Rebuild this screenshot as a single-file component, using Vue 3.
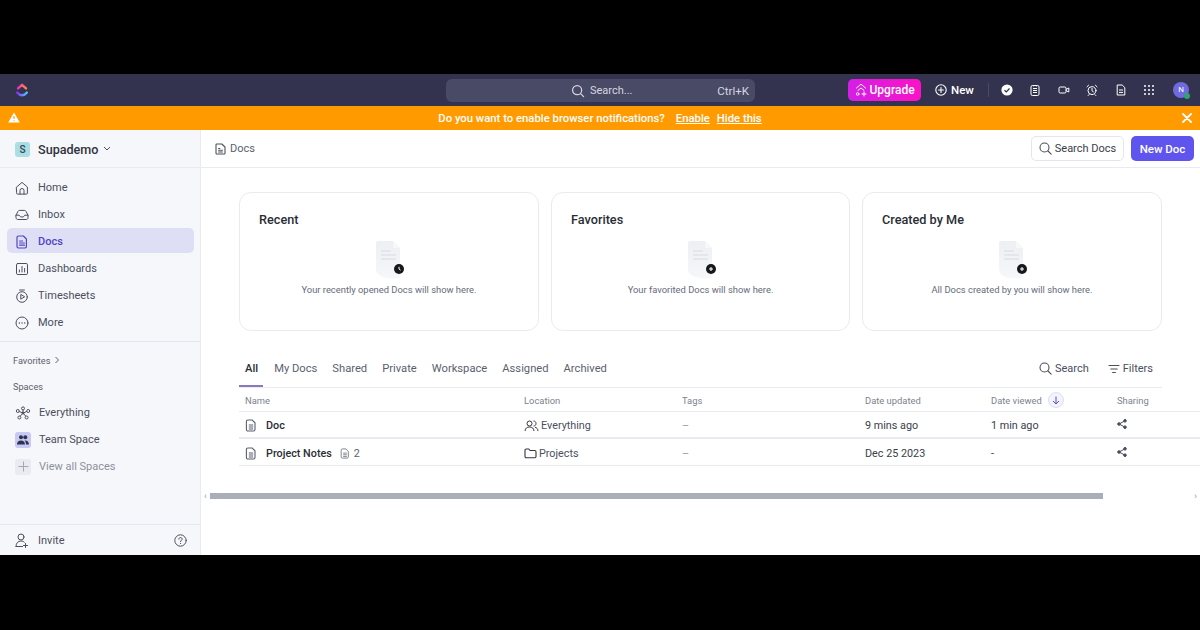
<script setup>
const navItems = [
  { label: 'Home', icon: 'home' },
  { label: 'Inbox', icon: 'inbox' },
  { label: 'Docs', icon: 'doc', active: true },
  { label: 'Dashboards', icon: 'dash' },
  { label: 'Timesheets', icon: 'timer' },
  { label: 'More', icon: 'more' }
]

const cards = [
  { title: 'Recent', text: 'Your recently opened Docs will show here.', badge: 'clock' },
  { title: 'Favorites', text: 'Your favorited Docs will show here.', badge: 'plus' },
  { title: 'Created by Me', text: 'All Docs created by you will show here.', badge: 'plus' }
]

const tabs = ['All', 'My Docs', 'Shared', 'Private', 'Workspace', 'Assigned', 'Archived']
</script>

<template>
  <div class="frame">
    <div class="app">
      <header class="topbar">
        <svg class="logo" width="14" height="16" viewBox="0 0 14 16" fill="none" stroke-width="2.4" stroke-linecap="round" stroke-linejoin="round">
          <defs>
            <linearGradient id="logoTop" x1="0" y1="0" x2="1" y2="0">
              <stop offset="0" stop-color="#f02fc2" />
              <stop offset="1" stop-color="#ff8a3c" />
            </linearGradient>
            <linearGradient id="logoBottom" x1="0" y1="0" x2="1" y2="0">
              <stop offset="0" stop-color="#8930fd" />
              <stop offset="1" stop-color="#49ccf9" />
            </linearGradient>
          </defs>
          <path d="M3 6.4 7 2.8l4 3.6" stroke="url(#logoTop)" />
          <path d="M2.2 10.6C3.4 12.2 5 13.2 7 13.2s3.6-1 4.8-2.6" stroke="url(#logoBottom)" />
        </svg>
        <div class="search">
          <svg width="14" height="14" viewBox="0 0 16 16" fill="none" stroke="#d5d6e2" stroke-width="1.4" stroke-linecap="round"><circle cx="7" cy="7" r="5.2" /><path d="m11 11 3.4 3.4" /></svg>
          <span class="search-text">Search...</span>
          <span class="search-key">Ctrl+K</span>
        </div>
        <div class="top-actions">
          <button class="upgrade">
            <svg width="12" height="14" viewBox="0 0 12 14" fill="none" stroke="#fff" stroke-width="1" stroke-linecap="round" stroke-linejoin="round"><path d="M1.500 5 6 1.200 10.500 5M3 7.500 6 5l3 2.500" /><circle cx="2.600" cy="11" r="1.300" /><path d="M7 11h4M9 9v4" /></svg>
            Upgrade
          </button>
          <div class="new">
            <svg width="12" height="12" viewBox="0 0 12 12" fill="none" stroke="#fff" stroke-width="1.100" stroke-linecap="round"><circle cx="6" cy="6" r="5.200" /><path d="M6 3.600v4.800M3.600 6h4.800" /></svg>
            New
          </div>
          <span class="top-sep"></span>
          <div class="top-icons">
            <svg width="12" height="12" viewBox="0 0 12 12"><circle cx="6" cy="6" r="5.600" fill="#fff" /><path d="m3.500 6.200 1.800 1.700 3.200-3.400" fill="none" stroke="#33334f" stroke-width="1.300" /></svg>
            <svg width="12" height="12" viewBox="0 0 12 12" fill="none" stroke="#fff" stroke-width="1"><rect x="2" y="1.500" width="8" height="10" rx="1.400" /><path d="M4 4.500h4M4 6.500h4M4 8.500h4M4.500 1v1.400M7.500 1v1.400" /></svg>
            <svg width="12" height="12" viewBox="0 0 12 12" fill="none" stroke="#fff" stroke-width="1"><rect x="1" y="3" width="7" height="6" rx="1.200" /><path d="m8 5.400 2.800-1.400v4L8 6.600" /></svg>
            <svg width="12" height="12" viewBox="0 0 12 12" fill="none" stroke="#fff" stroke-width="1" stroke-linecap="round"><circle cx="6" cy="6.600" r="4" /><path d="M6 4.400v2.400l1.400 1M1 2.800 2.600 1.200M11 2.800 9.400 1.200M3 10.600l-.8.900M9 10.600l.8.900" /></svg>
            <svg width="12" height="12" viewBox="0 0 12 12" fill="none" stroke="#fff" stroke-width="1" stroke-linejoin="round"><path d="M2.200 1h5l2.600 2.600V11H2.200zM4 6h4M4 8.400h4" /></svg>
            <svg width="12" height="12" viewBox="0 0 12 12" fill="#fff"><circle cx="2" cy="2" r="1" /><circle cx="6" cy="2" r="1" /><circle cx="10" cy="2" r="1" /><circle cx="2" cy="6" r="1" /><circle cx="6" cy="6" r="1" /><circle cx="10" cy="6" r="1" /><circle cx="2" cy="10" r="1" /><circle cx="6" cy="10" r="1" /><circle cx="10" cy="10" r="1" /></svg>
          </div>
          <div class="avatar">N<span class="online"></span></div>
        </div>
      </header>

      <div class="banner">
        <svg class="warn" width="12" height="11" viewBox="0 0 12 11"><path d="M6 .4 11.800 10.600H.2z" fill="#fff" /><path d="M6 4v3M6 8.200v1" stroke="#ff9a00" stroke-width="1.100" /></svg>
        <span class="banner-text">Do you want to enable browser notifications?</span>
        <a class="banner-link first">Enable</a>
        <a class="banner-link">Hide this</a>
        <svg class="close" width="10" height="10" viewBox="0 0 10 10" stroke="#fff" stroke-width="1.800" stroke-linecap="round"><path d="m1 1 8 8M9 1 1 9" /></svg>
      </div>

      <div class="body">
        <aside class="sidebar">
          <div class="workspace">
            <span class="ws-badge">S</span>
            <span class="ws-name">Supademo</span>
            <svg width="8" height="6" viewBox="0 0 8 6" fill="none" stroke="#4b4f5e" stroke-width="1"><path d="m1 1 3 3 3-3" /></svg>
          </div>

          <nav class="nav">
            <div v-for="item in navItems" :key="item.label" class="nav-item" :class="{ active: item.active }">
              <svg width="14" height="14" viewBox="0 0 14 14" fill="none" stroke="currentColor" stroke-width="1" stroke-linejoin="round" stroke-linecap="round">
                <template v-if="item.icon === 'home'"><path d="M1.600 6 7 1.400 12.400 6v6.200a.9.9 0 0 1-.9.9h-9a.9.9 0 0 1-.9-.9z" /><path d="M5 13V9.500a2 2 0 0 1 4 0V13" /></template>
                <template v-else-if="item.icon === 'inbox'"><path d="M1 7.200 3 3.400c.3-.6.8-1 1.500-1h5c.7 0 1.200.4 1.500 1l2 3.800v2.600c0 1-.8 1.700-1.700 1.700H2.700C1.800 11.500 1 10.800 1 9.800z" /><path d="M1 7.200h3.200c.3 1.200 1.400 1.800 2.800 1.800s2.500-.6 2.800-1.800H13" /></template>
                <template v-else-if="item.icon === 'doc'"><path d="M3.400 1h5l3 3v7.600c0 .8-.6 1.400-1.400 1.400H3.400C2.600 13 2 12.400 2 11.600V2.400C2 1.600 2.600 1 3.400 1z" stroke-width="1.200" /><path d="M4.600 6h3M4.600 8h4.800M4.600 10.200h4.800" stroke-width="1.200" /></template>
                <template v-else-if="item.icon === 'dash'"><rect x="1.500" y="1.500" width="11" height="11" rx="1.300" /><path d="M4.400 10V8M7 10V4.500M9.600 10V6.500" /></template>
                <template v-else-if="item.icon === 'timer'"><circle cx="7" cy="8" r="5.300" /><path d="M4.600 1h4.800" /><path d="M5.800 5.800v4.400L9.300 8z" /></template>
                <template v-else><circle cx="7" cy="7" r="6" /><path d="M4.300 7h.1M7 7h.1M9.700 7h.1" stroke-width="1.300" /></template>
              </svg>
              <span>{{ item.label }}</span>
            </div>
          </nav>

          <div class="side-sep"></div>

          <div class="favorites">
            Favorites
            <svg width="6" height="8" viewBox="0 0 6 8" fill="none" stroke="#5a5f6f" stroke-width="1"><path d="m1.500 1 3 3-3 3" /></svg>
          </div>
          <div class="spaces-title">Spaces</div>

          <div class="space-list">
            <div class="space-item">
              <svg width="16" height="14" viewBox="0 0 16 14" fill="none" stroke="#4b4f5e" stroke-width="1"><circle cx="8" cy="2.400" r="1.500" /><circle cx="2.800" cy="5" r="1.500" /><circle cx="13.200" cy="5" r="1.500" /><circle cx="4.400" cy="11.500" r="1.500" /><circle cx="11.600" cy="11.500" r="1.500" /><circle cx="8" cy="7" r="1" fill="#4b4f5e" /><path d="M8 4v2M4.200 5.500 7 6.700M11.800 5.500 9 6.700M5.200 10.200 7.400 7.800M10.800 10.200 8.600 7.800" /></svg>
              <span>Everything</span>
            </div>
            <div class="space-item">
              <span class="team-badge">
                <svg width="12" height="10" viewBox="0 0 12 10" fill="#2f3350"><circle cx="4" cy="2.300" r="2" /><circle cx="8.300" cy="2.300" r="2" /><path d="M0 9.500c0-2.500 1.700-4 4-4s4 1.500 4 4zM9 9.500c0-1.600-.5-3-1.500-4 2.500-.4 4.500 1.300 4.500 4z" /></svg>
              </span>
              <span>Team Space</span>
            </div>
            <div class="space-item muted">
              <span class="add-badge">
                <svg width="11" height="11" viewBox="0 0 11 11" stroke="#a4a8b4" stroke-width="1"><path d="M5.500 .5v10M.5 5.500h10" /></svg>
              </span>
              <span>View all Spaces</span>
            </div>
          </div>

          <div class="invite">
            <svg width="14" height="15" viewBox="0 0 14 15" fill="none" stroke="#4b4f5e" stroke-width="1" stroke-linecap="round"><circle cx="6" cy="4" r="3" /><path d="M1 13.500c0-3.400 2-5.500 5-5.500 1.400 0 2.500.4 3.300 1.200M1 13.500h6.500M10.500 10.500v4M8.500 12.500h4" /></svg>
            <span>Invite</span>
            <svg class="help" width="13" height="13" viewBox="0 0 13 13" fill="none" stroke="#4b4f5e" stroke-width="1" stroke-linecap="round"><circle cx="6.500" cy="6.500" r="5.700" /><path d="M4.800 5.200c0-1 .7-1.600 1.700-1.600s1.700.6 1.700 1.400c0 1.300-1.700 1.300-1.700 2.600M6.500 9.400v.2" /></svg>
          </div>
        </aside>

        <main class="main">
          <div class="page-head">
            <svg width="11" height="12" viewBox="0 0 11 12" fill="none" stroke="#4b4f5e" stroke-width="1.100" stroke-linejoin="round"><path d="M1 1.800C1 1.300 1.400 1 1.800 1h5L10 4v6.200c0 .5-.4.800-.8.800H1.800c-.4 0-.8-.3-.8-.8zM3.200 5.500h2M3.200 7.200h4.600M3.200 9h4.600" /></svg>
            <span class="crumb">Docs</span>
            <button class="btn-search">
              <svg width="13" height="13" viewBox="0 0 13 13" fill="none" stroke="#4b4f5e" stroke-width="1.100" stroke-linecap="round"><circle cx="5.500" cy="5.500" r="4.500" /><path d="m9 9 3.200 3.200" /></svg>
              Search Docs
            </button>
            <button class="btn-new">New Doc</button>
          </div>

          <section class="cards">
            <div v-for="card in cards" :key="card.title" class="card">
              <h3>{{ card.title }}</h3>
              <svg class="empty-doc" width="30" height="40" viewBox="0 0 30 40">
                <defs>
                  <linearGradient id="sheet" x1="0" y1="0" x2="0" y2="1">
                    <stop offset="0" stop-color="#eeeff3" />
                    <stop offset="1" stop-color="#f6f7f9" />
                  </linearGradient>
                </defs>
                <path d="M4 1h15l7 7v28c0 1.500-1.200 2.500-3 2.500C12 38.500 2 37 2 29V3c0-1.200.8-2 2-2z" fill="url(#sheet)" />
                <path d="M19 1l7 7h-7z" fill="#f8f8fa" />
                <path d="M7 11h10M7 15h15M7 19h15" stroke="#d8dae0" stroke-width="1" />
                <circle cx="25" cy="29" r="5" fill="#17181c" />
                <path v-if="card.badge === 'clock'" d="M25 26.800V29l1.600 1.200" stroke="#fff" stroke-width="1" fill="none" />
                <path v-else d="M25 27v4M23 29h4" stroke="#fff" stroke-width="1.100" />
              </svg>
              <p>{{ card.text }}</p>
            </div>
          </section>

          <section class="tabs-row">
            <div class="tabs">
              <span v-for="(tab, i) in tabs" :key="tab" class="tab" :class="{ current: i === 0 }">{{ tab }}</span>
            </div>
            <div class="tab-tools">
              <span class="tool">
                <svg width="13" height="13" viewBox="0 0 13 13" fill="none" stroke="#4b4f5e" stroke-width="1.100" stroke-linecap="round"><circle cx="5.500" cy="5.500" r="4.500" /><path d="m9 9 3.200 3.200" /></svg>
                Search
              </span>
              <span class="tool">
                <svg width="12" height="10" viewBox="0 0 12 10" stroke="#4b4f5e" stroke-width="1.100" stroke-linecap="round"><path d="M1 1.500h10M2.800 5h6.400M4.600 8.500h2.800" /></svg>
                Filters
              </span>
            </div>
          </section>

          <section class="table">
            <div class="row head">
              <span class="name-col">Name</span>
              <span>Location</span>
              <span>Tags</span>
              <span>Date updated</span>
              <span class="viewed">Date viewed
                <span class="sort">
                  <svg width="8" height="9" viewBox="0 0 8 9" fill="none" stroke="#5b4fc9" stroke-width="1"><path d="M4 .5v7.500M1 5l3 3 3-3" /></svg>
                </span>
              </span>
              <span>Sharing</span>
            </div>
            <div class="row first-row">
              <span class="name-col doc-name">
                <svg class="doc-icon" width="12" height="13" viewBox="0 0 12 13" fill="none" stroke="#5a5f6f" stroke-width="1.100"><path d="M2.800 1h4.400L10 3.800v6.800c0 .8-.6 1.400-1.400 1.400H2.800c-.8 0-1.400-.6-1.400-1.400V2.400C1.400 1.600 2 1 2.800 1zM3.800 6h4.400M3.800 8h4.400M3.800 10h4.400" /></svg>
                Doc
              </span>
              <span class="loc">
                <svg width="15" height="12" viewBox="0 0 15 12" fill="none" stroke="#33363f" stroke-width="1"><circle cx="5.500" cy="3.500" r="2.500" /><path d="M1 11c.3-2.800 2-4 4.500-4s4.200 1.200 4.500 4M9.500 1c1.500 0 2.500 1 2.500 2.500S11 6 9.500 6M11 7.200c1.800.4 2.800 1.700 3 3.800" /></svg>
                Everything
              </span>
              <span class="dash">–</span>
              <span>9 mins ago</span>
              <span>1 min ago</span>
              <span class="share">
                <svg width="10" height="10" viewBox="0 0 10 10" fill="#4b4f5e" stroke="#4b4f5e" stroke-width="1"><circle cx="2" cy="5" r="1.300" /><circle cx="8" cy="1.800" r="1.300" /><circle cx="8" cy="8.200" r="1.300" /><path d="m2 5 6-3.200M2 5l6 3.200" /></svg>
              </span>
            </div>
            <div class="row">
              <span class="name-col doc-name">
                <svg class="doc-icon" width="12" height="13" viewBox="0 0 12 13" fill="none" stroke="#5a5f6f" stroke-width="1.100"><path d="M2.800 1h4.400L10 3.800v6.800c0 .8-.6 1.400-1.400 1.400H2.800c-.8 0-1.400-.6-1.400-1.400V2.400C1.400 1.600 2 1 2.800 1zM3.800 6h4.400M3.800 8h4.400M3.800 10h4.400" /></svg>
                Project Notes
                <span class="sub-count">
                  <svg width="10" height="11" viewBox="0 0 12 13" fill="none" stroke="#6b6f7d" stroke-width="1"><path d="M2.800 1h4.400L10 3.800v6.800c0 .8-.6 1.400-1.400 1.400H2.800c-.8 0-1.400-.6-1.400-1.400V2.400C1.400 1.600 2 1 2.800 1zM3.800 6h4.400M3.800 8h4.400M3.800 10h4.400" /></svg>
                  2
                </span>
              </span>
              <span class="loc">
                <svg width="13" height="11" viewBox="0 0 13 11" fill="none" stroke="#33363f" stroke-width="1.100" stroke-linejoin="round"><path d="M1 2.200C1 1.500 1.500 1 2.200 1h2.600l1.200 1.500h4.800c.7 0 1.200.5 1.200 1.200v4.900c0 .7-.5 1.200-1.200 1.200H2.200C1.500 9.800 1 9.300 1 8.600z" /></svg>
                Projects
              </span>
              <span class="dash">–</span>
              <span>Dec 25 2023</span>
              <span>-</span>
              <span class="share">
                <svg width="10" height="10" viewBox="0 0 10 10" fill="#4b4f5e" stroke="#4b4f5e" stroke-width="1"><circle cx="2" cy="5" r="1.300" /><circle cx="8" cy="1.800" r="1.300" /><circle cx="8" cy="8.200" r="1.300" /><path d="m2 5 6-3.200M2 5l6 3.200" /></svg>
              </span>
            </div>
          </section>

          <div class="scroller">
            <span class="arrow">‹</span>
            <div class="track"><div class="thumb"></div></div>
            <span class="arrow">›</span>
          </div>
        </main>
      </div>
    </div>
  </div>
</template>

<style>
html,
body {
  margin: 0;
  background: #000;
}
</style>

<style scoped>
.frame {
  width: 1200px;
  height: 630px;
  padding: 74px 0 75px;
  box-sizing: border-box;
  background: #000;
  overflow: hidden;
  font-family: Roboto, sans-serif;
  font-size: 11px;
  color: #2a2e34;
}

.app {
  height: 481px;
  display: flex;
  flex-direction: column;
  background: #fff;
}

/* top bar */
.topbar {
  height: 32px;
  flex: none;
  display: flex;
  align-items: center;
  position: relative;
  background: #33334f;
  color: #fff;
}

.logo {
  margin-left: 15px;
}

.search {
  position: absolute;
  left: 446px;
  top: 5px;
  width: 309px;
  height: 23px;
  box-sizing: border-box;
  display: flex;
  align-items: center;
  padding: 0 6px 0 125px;
  background: #494a66;
  border-radius: 6px;
  color: #d5d6e2;
  font-size: 11px;
}

.search-text {
  margin-left: 5px;
}

.search-key {
  margin-left: auto;
  font-size: 11.500px;
}

.top-actions {
  margin-left: auto;
  display: flex;
  align-items: center;
  padding-right: 11px;
}

.upgrade {
  width: 73px;
  height: 22px;
  display: flex;
  align-items: center;
  justify-content: center;
  gap: 3px;
  padding: 0;
  border: 0;
  border-radius: 5px;
  background: linear-gradient(90deg, #d41fe6, #fb12c6);
  color: #fff;
  font: 500 12px Roboto, sans-serif;
}

.new {
  width: 38px;
  margin-left: 14px;
  display: flex;
  align-items: center;
  gap: 4px;
  font-size: 11.500px;
  font-weight: 500;
}

.new svg {
  flex: none;
}

.top-sep {
  width: 1px;
  height: 14px;
  margin: 0 12px 0 15px;
  background: #4a4b68;
}

.top-icons {
  display: flex;
  gap: 16.400px;
}

.avatar {
  width: 16px;
  height: 16px;
  margin-left: 18px;
  position: relative;
  border-radius: 50%;
  background: #6f6ae0;
  font-size: 8px;
  line-height: 16px;
  text-align: center;
}

.online {
  position: absolute;
  right: -1px;
  bottom: -1px;
  width: 6px;
  height: 6px;
  border-radius: 50%;
  background: #2ea66b;
}

/* banner */
.banner {
  height: 24px;
  flex: none;
  display: flex;
  align-items: center;
  justify-content: center;
  position: relative;
  background: #ff9a00;
  color: #fff;
  font-size: 11.300px;
  font-weight: 500;
}

.warn {
  position: absolute;
  left: 8px;
  top: 6px;
}

.banner-link {
  margin-left: 7px;
  text-decoration: underline;
}

.banner-link.first {
  margin-left: 11px;
}

.close {
  position: absolute;
  right: 8px;
  top: 7px;
}

.body {
  flex: 1;
  display: flex;
  min-height: 0;
}

/* sidebar */
.sidebar {
  width: 201px;
  flex: none;
  box-sizing: border-box;
  display: flex;
  flex-direction: column;
  background: #f6f7fa;
  border-right: 1px solid #e9ebf0;
  color: #4b4f5e;
}

.workspace {
  height: 38px;
  flex: none;
  display: flex;
  align-items: center;
  padding: 1px 0 0 15px;
  border-bottom: 1px solid #e9ebf0;
  box-sizing: border-box;
}

.ws-badge {
  width: 15px;
  height: 15px;
  border-radius: 3px;
  background: #abdde2;
  color: #2c4a52;
  font-size: 10px;
  font-weight: 500;
  line-height: 15px;
  text-align: center;
}

.ws-name {
  margin: 0 5px 0 8px;
  font-size: 12.600px;
  font-weight: 500;
  color: #2f3340;
}

.nav {
  padding-top: 6px;
  display: flex;
  flex-direction: column;
  gap: 2px;
}

.nav-item {
  height: 25px;
  box-sizing: border-box;
  margin: 0 6px 0 7px;
  padding: 2px 0 0 8px;
  display: flex;
  align-items: center;
  gap: 9px;
  border-radius: 5px;
}

.nav-item.active {
  background: #dedef5;
  color: #5344c6;
  font-weight: 500;
}

.side-sep {
  height: 1px;
  margin-top: 7px;
  background: #e4e6f2;
}

.favorites {
  margin: 11px 0 0 13px;
  display: flex;
  align-items: center;
  gap: 4px;
  font-size: 9.200px;
  height: 14px;
  color: #5a5f6f;
}

.spaces-title {
  margin: 14px 0 0 13px;
  height: 14px;
  font-size: 9.200px;
  color: #5a5f6f;
}

.space-list {
  margin-top: 4px;
}

.space-item {
  height: 27px;
  padding-left: 15px;
  display: flex;
  align-items: center;
  gap: 8px;
}

.space-item.muted {
  color: #8d919d;
}

.team-badge,
.add-badge {
  width: 16px;
  height: 16px;
  border-radius: 3px;
  display: flex;
  align-items: center;
  justify-content: center;
}

.team-badge {
  background: #c8c9f5;
}

.add-badge {
  background: #e9ebf0;
}

.invite {
  margin-top: auto;
  height: 31px;
  flex: none;
  box-sizing: border-box;
  display: flex;
  align-items: center;
  gap: 9px;
  padding: 0 13px 0 15px;
  border-top: 1px solid #e4e6f2;
}

.help {
  margin-left: auto;
}

/* main */
.main {
  flex: 1;
  min-width: 0;
  display: flex;
  flex-direction: column;
}

.page-head {
  height: 38px;
  flex: none;
  box-sizing: border-box;
  display: flex;
  align-items: center;
  padding: 0 6px 0 14px;
  border-bottom: 1px solid #e9ebf0;
}

.crumb {
  margin-left: 4px;
  color: #5a5f6f;
}

.btn-search,
.btn-new {
  height: 25px;
  padding: 0;
  border-radius: 5px;
  font: 500 11.500px Roboto, sans-serif;
  display: flex;
  align-items: center;
  justify-content: center;
}

.btn-search {
  width: 93px;
  margin-left: auto;
  gap: 3px;
  background: #fff;
  border: 1px solid #e4e6ea;
  color: #3a3e49;
  font-size: 11px;
  font-weight: 400;
}

.btn-new {
  width: 63px;
  margin-left: 7px;
  border: 0;
  background: #5f55ee;
  color: #fff;
}

.cards {
  margin: 24px 37px 0 38px;
  display: grid;
  grid-template-columns: 300px 299px 300px;
  gap: 12px;
}

.card {
  height: 139px;
  box-sizing: border-box;
  padding: 19px 19px 0;
  display: flex;
  flex-direction: column;
  align-items: center;
  border: 1px solid #e9ebf0;
  border-radius: 12px;
}

.card h3 {
  align-self: flex-start;
  margin: 0;
  font-size: 12.700px;
  line-height: 16px;
  font-weight: 500;
  color: #2a2e34;
}

.empty-doc {
  margin-top: 12px;
}

.card p {
  margin: 3px 0 0;
  font-size: 9.400px;
  line-height: 14px;
  color: #656b78;
}

.tabs-row {
  margin: 25px 38px 0;
  height: 31px;
  display: flex;
  align-items: flex-start;
  justify-content: space-between;
  border-bottom: 1px solid #e9ebf0;
}

.tabs {
  display: flex;
  gap: 15px;
  font-size: 11.200px;
}

.tab {
  height: 31px;
  box-sizing: border-box;
  padding-top: 6px;
  color: #5a5f6f;
  position: relative;
}

.tab.current {
  padding: 6px 5px 0 6px;
  margin-right: -4px;
  color: #2a2e34;
  font-weight: 500;
  border-bottom: 2px solid #8b79bd;
}

.tab-tools {
  display: flex;
  gap: 19px;
  padding: 6px 9px 0 0;
}

.tool {
  display: flex;
  align-items: center;
  gap: 3px;
  color: #4b4f5e;
}

.table {
  margin-left: 38px;
}

.row {
  display: grid;
  grid-template-columns: 285px 158px 183px 126px 126px 1fr;
  height: 27px;
  box-sizing: border-box;
  padding-top: 2px;
  align-items: center;
  border-bottom: 1px solid #e9ebf0;
  color: #3a3e49;
  font-size: 10.800px;
}

.row.first-row {
  border-bottom-width: 2px;
}

.row.head {
  height: 24px;
  padding-top: 1px;
  font-size: 9.400px;
  color: #7c828d;
}

.name-col {
  padding-left: 6px;
}

.doc-name {
  display: flex;
  align-items: center;
  color: #2a2e34;
  font-weight: 500;
}

.doc-icon {
  margin-right: 9px;
}

.sub-count {
  display: flex;
  align-items: center;
  gap: 4px;
  margin-left: 8px;
  color: #5a5f6f;
  font-weight: 400;
}

.loc {
  display: flex;
  align-items: center;
  gap: 2px;
  color: #4b4f5e;
}

.dash {
  color: #9a9ea9;
}

.viewed {
  display: flex;
  align-items: center;
  gap: 6px;
}

.sort {
  width: 14px;
  height: 14px;
  border-radius: 50%;
  border: 1px solid #dedef5;
  background: #f3f3fc;
  display: flex;
  align-items: center;
  justify-content: center;
}

.scroller {
  margin-top: 26px;
  padding: 0 3px;
  height: 8px;
  display: flex;
  align-items: center;
  gap: 3px;
}

.arrow {
  font-size: 9px;
  line-height: 8px;
  color: #8d919d;
}

.track {
  flex: 1;
}

.thumb {
  width: 893px;
  height: 6px;
  background: #a9aeb8;
}
</style>
